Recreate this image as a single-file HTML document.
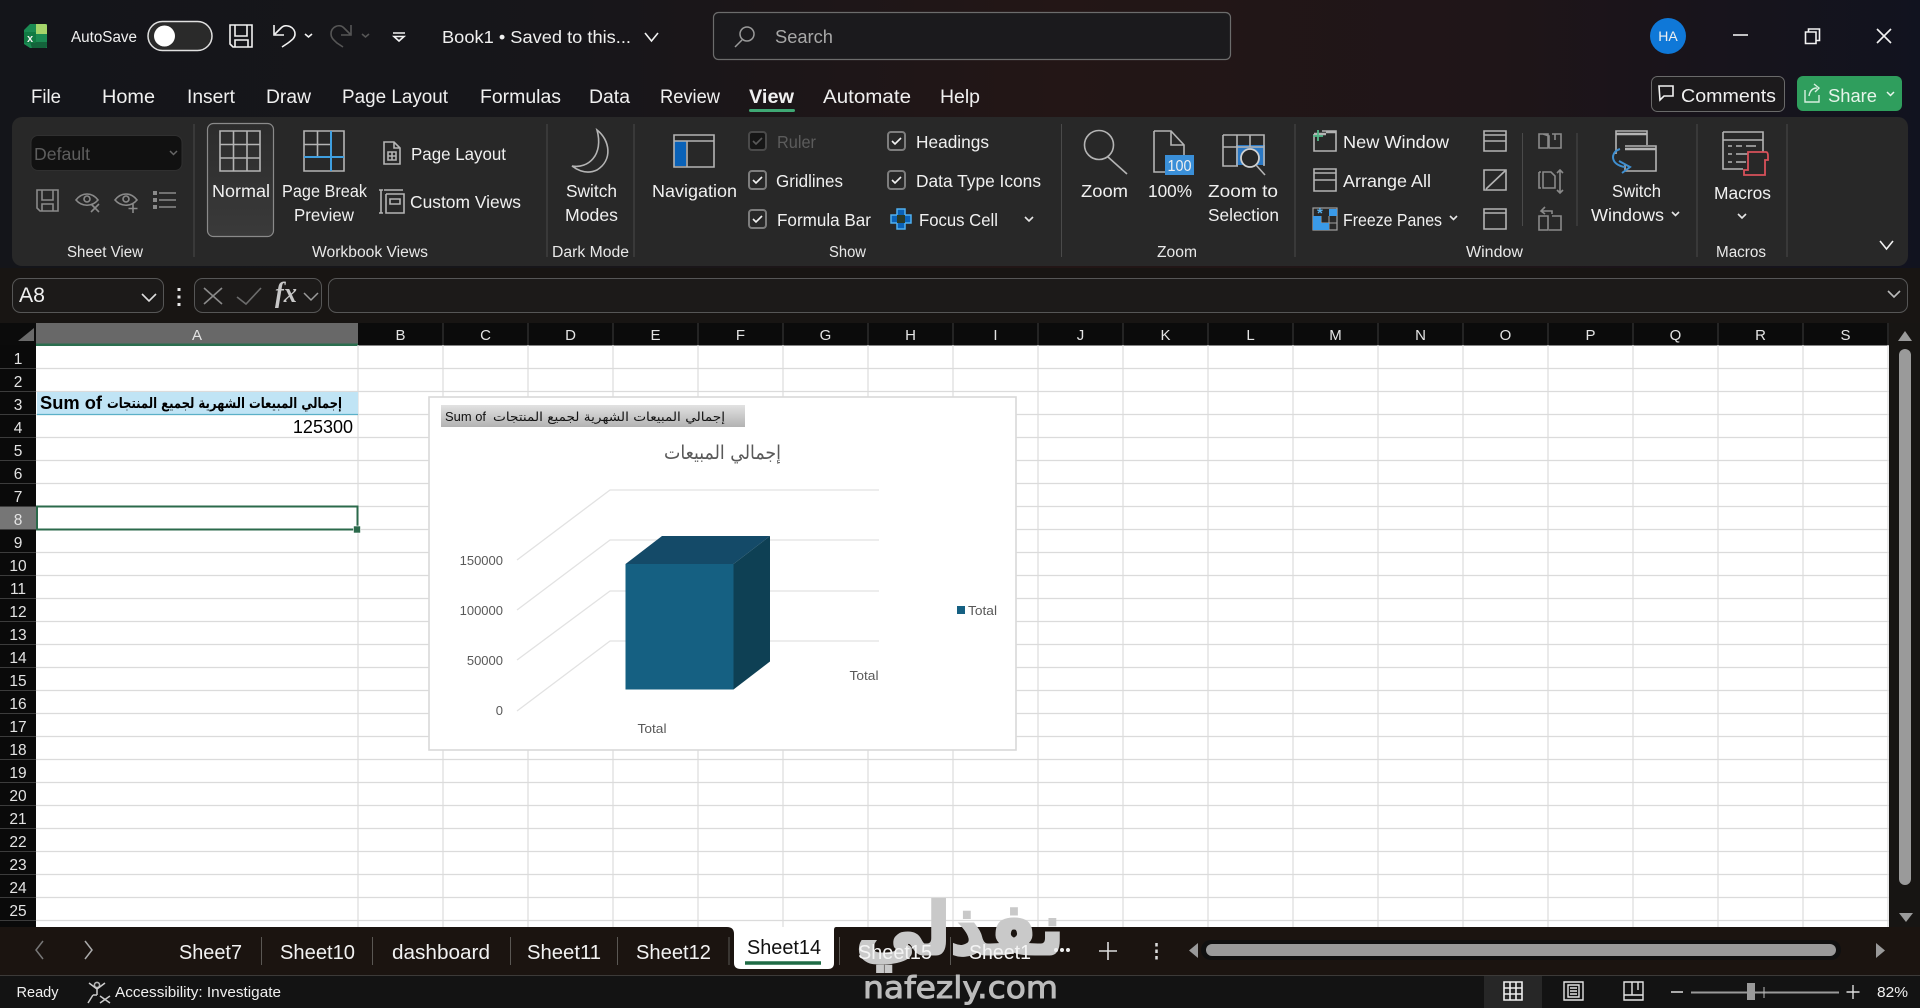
<!DOCTYPE html>
<html lang="en"><head><meta charset="utf-8"><title>Book1 - Excel</title>
<style>
html,body{margin:0;padding:0;background:#15161a;overflow:hidden;width:1920px;height:1008px}
svg{display:block}
text{font-family:"Liberation Sans","DejaVu Sans",sans-serif;fill:#f0f0f0;white-space:pre}
.r{font-size:17.5px}
.l{font-size:15.5px;fill:#e8e8e8}
.tab{font-size:19px}
.s{font-size:15px}
.sh{font-size:20px;fill:#f2f2f2}
.ch{font-size:13px;fill:#595959}
.rn{font-size:15.5px;text-anchor:middle;fill:#e4e4e4}
.cn{font-size:15px;text-anchor:middle;fill:#e4e4e4}
.ic{fill:none;stroke:#b4b4b4;stroke-width:1.6}
.ig{fill:none;stroke:#8a8a8a;stroke-width:1.6}
.w{fill:none;stroke:#f2f2f2;stroke-width:1.6}
.cv{fill:none;stroke:#e6e6e6;stroke-width:1.6}
.sp{stroke:#4a4a4a;stroke-width:1}
.ar{font-family:"DejaVu Sans",sans-serif}
</style></head><body>
<svg xmlns="http://www.w3.org/2000/svg" width="1920" height="1008" viewBox="0 0 1920 1008">
<defs>
<linearGradient id="bg" x1="0" x2="1" y1="0" y2="0"><stop offset="0" stop-color="#14151a"/><stop offset=".3" stop-color="#17161a"/><stop offset=".55" stop-color="#231616"/><stop offset=".78" stop-color="#1f1518"/><stop offset="1" stop-color="#11131f"/></linearGradient>
<linearGradient id="sel" x1="0" x2="0" y1="0" y2="1"><stop offset="0" stop-color="#2c2c2c"/><stop offset="1" stop-color="#3a3a3a"/></linearGradient>
<linearGradient id="pb" x1="0" x2="0" y1="0" y2="1"><stop offset="0" stop-color="#e2e2e2"/><stop offset="1" stop-color="#b2b2b2"/></linearGradient>
</defs>
<rect width="1920" height="1008" fill="url(#bg)"/>
<rect y="268" width="1920" height="56" fill="#181513"/>

<!-- title bar -->
<path d="M30 24H47V48H30L24 44V30Z" fill="#1b8a52"/><path d="M36 24H45Q47 24 47 26V34H36Z" fill="#a5d46a"/><path d="M30 42H47V46Q47 48 45 48H32Z" fill="#14633b"/><rect x="24" y="32" width="12" height="11" rx="1.5" fill="#117a43"/>
<text x="27" y="42" style="font-size:11px;font-weight:bold">x</text>
<text x="71" y="42" style="font-size:15.5px" textLength="66" lengthAdjust="spacingAndGlyphs">AutoSave</text>
<rect x="148" y="21.5" width="64" height="29" rx="14.5" fill="#2a2a2a" stroke="#e0e0e0" stroke-width="1.5"/><circle cx="164.500" cy="36" r="10.500" fill="#fff"/>
<path class="w" d="M230 25H252V47H233L230 44ZM235 25V36H247V25M235 47V40H248V47"/>
<path class="w" d="M274 25V35H284M275 34L281 28C286 23 295 27 295 34C295 38 292 40 288 43L282 47"/>
<path class="w" d="M305 34l3.500 3 3.500-3" stroke-width="2"/>
<path fill="none" stroke="#565656" stroke-width="1.6" d="M351 25V35H341M350 34L344 28C339 23 331 27 331 34C331 38 334 40 337 43L343 47M362 34l3.500 3 3.500-3"/>
<path class="w" d="M393 33H405M394 36.500H404L399 41Z"/>
<text x="442" y="43" style="font-size:17.500px" textLength="189" lengthAdjust="spacingAndGlyphs">Book1 • Saved to this...</text>
<path class="w" d="M645 33L651.500 41L658 33"/>
<rect x="713.500" y="12.500" width="517" height="47" rx="5" fill="#1b1a1d" stroke="#6c6c6c" stroke-width="1.2"/>
<circle cx="747" cy="34" r="7" fill="none" stroke="#9a9a9a" stroke-width="1.5"/><path d="M742 40L735 47" stroke="#9a9a9a" stroke-width="1.5"/>
<text x="775" y="43" style="font-size:18px;fill:#a8a8a8" textLength="58" lengthAdjust="spacingAndGlyphs">Search</text>
<circle cx="1668" cy="36" r="18" fill="#0f78d8"/><text x="1668" y="41" text-anchor="middle" style="font-size:14px">HA</text>
<path d="M1733 35H1748" stroke="#eee" stroke-width="1.6"/>
<path class="w" d="M1805.500 32H1816V43.500H1805.500ZM1808.500 32V29H1819.500V40.500H1816"/>
<path class="w" d="M1877 29L1891 43M1891 29L1877 43"/>
<rect x="1651.500" y="76.500" width="133" height="35" rx="6" fill="#1c1a1c" stroke="#6a6a6a"/>
<path class="w" d="M1659 86H1673V96H1664L1660 100Z"/>
<text x="1681" y="102" style="font-size:18px" textLength="95" lengthAdjust="spacingAndGlyphs">Comments</text>
<rect x="1797" y="76" width="105" height="35" rx="6" fill="#2f9e5d"/>
<path fill="none" stroke="#d8efe0" stroke-width="1.4" d="M1805 90V102H1819V95M1809 96C1810 90 1813 88 1817 88M1814 84L1819 88L1815 92"/>
<text x="1828" y="102" style="font-size:18.5px;fill:#e6f4ea" textLength="49" lengthAdjust="spacingAndGlyphs">Share</text>
<path d="M1887 92l3.500 3.500 3.500-3.500" fill="none" stroke="#eaf6ee" stroke-width="1.5"/>

<!-- tabs -->
<text class="tab" x="31" y="103" textLength="30" lengthAdjust="spacingAndGlyphs">File</text>
<text class="tab" x="102" y="103" textLength="53" lengthAdjust="spacingAndGlyphs">Home</text>
<text class="tab" x="187" y="103" textLength="48" lengthAdjust="spacingAndGlyphs">Insert</text>
<text class="tab" x="266" y="103" textLength="45" lengthAdjust="spacingAndGlyphs">Draw</text>
<text class="tab" x="342" y="103" textLength="106" lengthAdjust="spacingAndGlyphs">Page Layout</text>
<text class="tab" x="480" y="103" textLength="81" lengthAdjust="spacingAndGlyphs">Formulas</text>
<text class="tab" x="589" y="103" textLength="41" lengthAdjust="spacingAndGlyphs">Data</text>
<text class="tab" x="660" y="103" textLength="60" lengthAdjust="spacingAndGlyphs">Review</text>
<text class="tab" x="749" y="103" textLength="45" lengthAdjust="spacingAndGlyphs" style="font-weight:bold">View</text>
<text class="tab" x="823" y="103" textLength="88" lengthAdjust="spacingAndGlyphs">Automate</text>
<text class="tab" x="940" y="103" textLength="40" lengthAdjust="spacingAndGlyphs">Help</text>
<rect x="749" y="109" width="46" height="3" rx="1.500" fill="#3fa874"/>

<!-- ribbon -->
<rect x="12" y="117" width="1896" height="149" rx="10" fill="#282828"/>
<g class="sp">
<path d="M194 124V257M547 124V257M634 124V257M1061.500 124V257M1295 124V257M1697 124V257M1787 124V257M1522.500 133V226M1577 133V226"/>
</g>
<rect x="31" y="135.500" width="151" height="35" rx="7" fill="#111" stroke="#303030"/>
<text x="34" y="160" style="font-size:17.500px;fill:#5e5e5e" textLength="56" lengthAdjust="spacingAndGlyphs">Default</text>
<path d="M170 151l3.500 3.500 3.500-3.500" fill="none" stroke="#666" stroke-width="1.5"/>
<path class="ig" d="M37 190H58V211H40L37 208ZM42 190V200H53V190M42 211V204H53V211"/>
<path class="ig" d="M76 200C82 192 92 192 98 200C92 207 82 207 76 200ZM91 204L99 212M99 204L91 212"/><circle cx="87" cy="199" r="3" class="ig"/>
<path class="ig" d="M115 200C121 192 131 192 137 200C131 207 121 207 115 200ZM133 204V213M128.500 208.500H137.500"/><circle cx="126" cy="199" r="3" class="ig"/>
<path class="ig" d="M159 193H176M159 200H176M159 207H176"/><path fill="#8a8a8a" d="M153 191h4v4h-4zM153 198h4v4h-4zM153 205h4v4h-4z"/>
<text class="l" x="67" y="257" textLength="76" lengthAdjust="spacingAndGlyphs">Sheet View</text>

<rect x="207.500" y="123.500" width="66" height="113" rx="6" fill="url(#sel)" stroke="#8a8a8a" stroke-width="1.2"/>
<path class="ic" stroke-width="2" d="M220 131H260V171H220ZM233.500 131V171M247 131V171M220 144.500H260M220 158H260"/>
<text class="r" x="212" y="197" textLength="58" lengthAdjust="spacingAndGlyphs">Normal</text>
<path class="ic" stroke-width="2" d="M304 131H344V171H304ZM317.500 131V157M304 144.500H331"/>
<path d="M304 157H344M331 131V171" stroke="#3f9fe0" stroke-width="2"/>
<text class="r" x="282" y="197" textLength="85" lengthAdjust="spacingAndGlyphs">Page Break</text>
<text class="r" x="294" y="221" textLength="60" lengthAdjust="spacingAndGlyphs">Preview</text>
<path class="ic" d="M384 142H394L400 148V164H384ZM394 142V148H400M388 152H396V160H388ZM392 152V160M388 156H396"/>
<text class="r" x="411" y="160" textLength="95" lengthAdjust="spacingAndGlyphs">Page Layout</text>
<path class="ic" d="M381 190V213M379 190H383M379 213H383M384 190H403M386 194V213H404V194H386M390 199H400V204H390Z"/>
<text class="r" x="410" y="208" textLength="111" lengthAdjust="spacingAndGlyphs">Custom Views</text>
<text class="l" x="312" y="257" textLength="116" lengthAdjust="spacingAndGlyphs">Workbook Views</text>

<path class="ic" stroke-width="1.800" d="M597 130C610 140 613 160 597 170C588 174 580 172 572 166C588 169 604 155 597 130Z"/>
<text class="r" x="566" y="197" textLength="51" lengthAdjust="spacingAndGlyphs">Switch</text>
<text class="r" x="565" y="221" textLength="53" lengthAdjust="spacingAndGlyphs">Modes</text>
<text class="l" x="552" y="257" textLength="77" lengthAdjust="spacingAndGlyphs">Dark Mode</text>

<rect x="674" y="141" width="12" height="25" fill="#0a62b8"/>
<path class="ic" stroke-width="2" d="M674 135H714V167H674ZM674 141H714M687 141V167"/>
<text class="r" x="652" y="197" textLength="85" lengthAdjust="spacingAndGlyphs">Navigation</text>

<!-- checkboxes -->
<rect x="749" y="132" width="17" height="18" rx="3" fill="#161616" stroke="#4a4a4a" stroke-width="2"/><path d="M753 141l3 3 6-6" fill="none" stroke="#5a5a5a" stroke-width="1.6"/>
<text x="777" y="148" class="r" style="fill:#5c5c5c" textLength="39" lengthAdjust="spacingAndGlyphs">Ruler</text>
<rect x="749" y="171" width="17" height="18" rx="3" fill="none" stroke="#7d7d7d" stroke-width="2"/><path class="w" d="M753 180l3 3 6-6"/>
<text class="r" x="776" y="187" textLength="67" lengthAdjust="spacingAndGlyphs">Gridlines</text>
<rect x="749" y="210" width="17" height="18" rx="3" fill="none" stroke="#7d7d7d" stroke-width="2"/><path class="w" d="M753 219l3 3 6-6"/>
<text class="r" x="777" y="226" textLength="94" lengthAdjust="spacingAndGlyphs">Formula Bar</text>
<rect x="888" y="132" width="17" height="18" rx="3" fill="none" stroke="#7d7d7d" stroke-width="2"/><path class="w" d="M892 141l3 3 6-6"/>
<text class="r" x="916" y="148" textLength="73" lengthAdjust="spacingAndGlyphs">Headings</text>
<rect x="888" y="171" width="17" height="18" rx="3" fill="none" stroke="#7d7d7d" stroke-width="2"/><path class="w" d="M892 180l3 3 6-6"/>
<text class="r" x="916" y="187" textLength="125" lengthAdjust="spacingAndGlyphs">Data Type Icons</text>
<path d="M897 209H905V215H911V223H905V229H897V223H891V215H897Z" fill="#0a62b8" stroke="#50b0f0" stroke-width="1.500"/><rect x="897" y="215" width="8" height="8" fill="#2a3a2a"/>
<text class="r" x="919" y="226" textLength="79" lengthAdjust="spacingAndGlyphs">Focus Cell</text>
<path class="cv" d="M1025 217l4 4 4-4"/>
<text class="l" x="829" y="257" textLength="37" lengthAdjust="spacingAndGlyphs">Show</text>

<!-- zoom -->
<circle cx="1099" cy="145" r="14.500" class="ic" stroke-width="1.800"/><path class="ic" stroke-width="1.800" d="M1108 157L1127 174"/>
<text class="r" x="1081" y="197" textLength="47" lengthAdjust="spacingAndGlyphs">Zoom</text>
<path class="ic" stroke-width="1.800" d="M1154 131H1171L1184 145V155M1171 131V145H1184M1154 131V172H1165"/>
<rect x="1165" y="155" width="29" height="20" fill="#3a8fd8"/><text x="1167.500" y="171" style="font-size:16px" textLength="24" lengthAdjust="spacingAndGlyphs">100</text>
<text class="r" x="1148" y="197" textLength="44" lengthAdjust="spacingAndGlyphs">100%</text>
<rect x="1236" y="145" width="29" height="20" fill="#2a78c4"/>
<path class="ic" stroke-width="1.800" d="M1223 135H1264V166M1223 135V166H1238M1223 147H1264M1237 135V166M1250 135V147"/>
<circle cx="1250" cy="158" r="9" fill="#282828" stroke="#d0d0d0" stroke-width="1.800"/><path class="ic" stroke="#d0d0d0" stroke-width="1.800" d="M1256 165L1265 175"/>
<text class="r" x="1208" y="197" textLength="70" lengthAdjust="spacingAndGlyphs">Zoom to</text>
<text class="r" x="1208" y="221" textLength="71" lengthAdjust="spacingAndGlyphs">Selection</text>
<text class="l" x="1157" y="257" textLength="40" lengthAdjust="spacingAndGlyphs">Zoom</text>

<!-- window -->
<path class="ic" stroke-width="1.800" d="M1314 134V151H1336V131H1322"/><path d="M1314 134H1326M1326 132H1336" stroke="#b4b4b4" stroke-width="2.500"/><path d="M1313 136H1323M1318 130V141" stroke="#52b788" stroke-width="1.800"/>
<text class="r" x="1343" y="148" textLength="106" lengthAdjust="spacingAndGlyphs">New Window</text>
<path class="ic" stroke-width="1.800" d="M1314 169H1336V191H1314ZM1314 180H1336M1314 173H1336"/>
<text class="r" x="1343" y="187" textLength="88" lengthAdjust="spacingAndGlyphs">Arrange All</text>
<rect x="1313" y="208" width="24" height="22" fill="none" stroke="#a0a0a0" stroke-width="1.200"/><path d="M1321 216V230M1329 216V230M1313 223H1337" stroke="#a0a0a0"/><rect x="1313" y="216" width="8" height="7" fill="#3a9ae8"/><rect x="1329" y="209" width="8" height="7" fill="#3a9ae8"/><rect x="1313" y="223" width="8" height="7" fill="#3a9ae8"/><rect x="1321" y="223" width="8" height="7" fill="#3a9ae8"/>
<text x="1317" y="218" style="font-size:15px;fill:#5ab2f0;font-weight:bold">*</text>
<text class="r" x="1343" y="226" textLength="99" lengthAdjust="spacingAndGlyphs">Freeze Panes</text>
<path class="cv" d="M1450 216l3.500 3.500 3.500-3.500"/>
<path class="ic" stroke-width="1.800" d="M1484 131H1506V151H1484ZM1484 141H1506M1484 135H1506"/>
<path class="ic" stroke-width="1.800" d="M1484 170H1506V190H1484ZM1486 189L1505 171"/>
<path class="ic" stroke-width="1.800" d="M1484 209H1506V229H1484ZM1484 213H1506"/>
<path class="ig" d="M1539 134H1548V148H1539ZM1543 134L1549 136V148M1552 134H1561V148H1549M1555 134V140"/>
<path class="ig" d="M1539 172V188H1541M1539 172H1541M1543 172H1551L1555 176V188H1543ZM1560 170V193M1557 173L1560 170L1563 173M1557 190L1560 193L1563 190"/>
<path class="ig" d="M1539 216H1548V230H1539ZM1552 216H1561V230H1549M1545 207L1541 211L1545 214M1541 211H1552V214"/>
<path class="ic" stroke-width="1.800" d="M1616 154V131H1647V145"/><path d="M1616 134H1647" stroke="#b4b4b4" stroke-width="2.500"/>
<path class="ic" stroke-width="1.800" d="M1625 146H1656V171H1625V165"/><path d="M1625 149H1656" stroke="#b4b4b4" stroke-width="2.500"/>
<path fill="none" stroke="#3f8fd0" stroke-width="2" d="M1620 149C1610 152 1610 165 1625 167M1619 161L1630 167L1622 173"/>
<text class="r" x="1612" y="197" textLength="49" lengthAdjust="spacingAndGlyphs">Switch</text>
<text class="r" x="1591" y="221" textLength="73" lengthAdjust="spacingAndGlyphs">Windows</text>
<path class="cv" d="M1672 212l3.500 3.500 3.500-3.500"/>
<text class="l" x="1466" y="257" textLength="57" lengthAdjust="spacingAndGlyphs">Window</text>

<!-- macros -->
<path class="ic" stroke-width="1.800" d="M1723 132H1763V168M1723 132V169H1743M1723 140H1763M1728 146H1732M1736 146H1742M1746 146H1756M1728 154H1732M1736 154H1752M1728 162H1732M1736 162H1746"/>
<path fill="#282828" stroke="#d8515a" stroke-width="1.800" d="M1750 152H1766Q1768 152 1768 156V160H1765V175H1744V170H1748V152Z"/>
<text class="r" x="1714" y="199" textLength="57" lengthAdjust="spacingAndGlyphs">Macros</text>
<path class="cv" d="M1738 214l4 4 4-4"/>
<text class="l" x="1716" y="257" textLength="50" lengthAdjust="spacingAndGlyphs">Macros</text>
<path class="w" d="M1880 241L1886.500 249L1893 241"/>

<!-- formula bar -->
<rect x="12.500" y="278.500" width="151" height="34" rx="8" fill="#1c1a19" stroke="#565656"/>
<text x="19" y="302" style="font-size:21px" textLength="26" lengthAdjust="spacingAndGlyphs">A8</text>
<path d="M142 294l7 7 7-7" fill="none" stroke="#ddd" stroke-width="1.600"/>
<path d="M179 288v3M179 295.500v3M179 303v3" stroke="#e8e8e8" stroke-width="3"/>
<rect x="194.500" y="278.500" width="127" height="34" rx="8" fill="#1c1a19" stroke="#565656"/>
<path d="M204 288L222 304M222 288L204 304" stroke="#8a8a8a" stroke-width="1.600"/>
<path d="M237 297L246 304L261 288" fill="none" stroke="#6c6c6c" stroke-width="1.600"/>
<text x="275" y="302" style="font-family:'Liberation Serif',serif;font-style:italic;font-weight:bold;font-size:28px;fill:#c8c8c8" textLength="22" lengthAdjust="spacingAndGlyphs">fx</text>
<path d="M304 293l7 7 7-7" fill="none" stroke="#9a9a9a" stroke-width="1.500"/>
<rect x="328.500" y="278.500" width="1579" height="34" rx="8" fill="#1c1a19" stroke="#565656"/>
<path d="M1888 291l6 6 6-6" fill="none" stroke="#bbb" stroke-width="1.600"/>

<!-- sheet grid -->
<rect x="36" y="345" width="1853" height="582" fill="#fff"/>
<rect y="323" width="1889" height="22.500" fill="#0b0b0b"/>
<rect y="345" width="36" height="582" fill="#0a0a0a"/>
<path d="M34 328V341H18Z" fill="#6a6a6a"/>
<rect x="36" y="323" width="322" height="21" fill="#686868"/>
<rect x="36" y="343.500" width="322" height="2.500" fill="#2b6e4f"/>
<rect y="506" width="36" height="23" fill="#767676"/>
<path stroke="#dbdbdb" stroke-width="1.200" fill="none" d="M358 345V927M443 345V927M528 345V927M613 345V927M698 345V927M783 345V927M868 345V927M953 345V927M1038 345V927M1123 345V927M1208 345V927M1293 345V927M1378 345V927M1463 345V927M1548 345V927M1633 345V927M1718 345V927M1803 345V927M1888 345V927M36 368.500H1889M36 391.500H1889M36 414.500H1889M36 437.500H1889M36 460.500H1889M36 483.500H1889M36 506.500H1889M36 529.500H1889M36 552.500H1889M36 575.500H1889M36 598.500H1889M36 621.500H1889M36 644.500H1889M36 667.500H1889M36 690.500H1889M36 713.500H1889M36 736.500H1889M36 759.500H1889M36 782.500H1889M36 805.500H1889M36 828.500H1889M36 851.500H1889M36 874.500H1889M36 897.500H1889M36 920.500H1889"/>
<path stroke="#3c3c3c" fill="none" d="M443 323V345M528 323V345M613 323V345M698 323V345M783 323V345M868 323V345M953 323V345M1038 323V345M1123 323V345M1208 323V345M1293 323V345M1378 323V345M1463 323V345M1548 323V345M1633 323V345M1718 323V345M1803 323V345M1888 323V345M0 368.500H36M0 391.500H36M0 414.500H36M0 437.500H36M0 460.500H36M0 483.500H36M0 506.500H36M0 529.500H36M0 552.500H36M0 575.500H36M0 598.500H36M0 621.500H36M0 644.500H36M0 667.500H36M0 690.500H36M0 713.500H36M0 736.500H36M0 759.500H36M0 782.500H36M0 805.500H36M0 828.500H36M0 851.500H36M0 874.500H36M0 897.500H36M0 920.500H36"/>
<g>
<text class="cn" x="197" y="340">A</text><text class="cn" x="400.500" y="340">B</text><text class="cn" x="485.500" y="340">C</text><text class="cn" x="570.500" y="340">D</text><text class="cn" x="655.500" y="340">E</text><text class="cn" x="740.500" y="340">F</text><text class="cn" x="825.500" y="340">G</text><text class="cn" x="910.500" y="340">H</text><text class="cn" x="995.500" y="340">I</text><text class="cn" x="1080.500" y="340">J</text><text class="cn" x="1165.500" y="340">K</text><text class="cn" x="1250.500" y="340">L</text><text class="cn" x="1335.500" y="340">M</text><text class="cn" x="1420.500" y="340">N</text><text class="cn" x="1505.500" y="340">O</text><text class="cn" x="1590.500" y="340">P</text><text class="cn" x="1675.500" y="340">Q</text><text class="cn" x="1760.500" y="340">R</text><text class="cn" x="1845.500" y="340">S</text>
</g>
<g>
<text class="rn" x="18" y="364">1</text><text class="rn" x="18" y="387">2</text><text class="rn" x="18" y="410">3</text><text class="rn" x="18" y="433">4</text><text class="rn" x="18" y="456">5</text><text class="rn" x="18" y="479">6</text><text class="rn" x="18" y="502">7</text><text class="rn" x="18" y="525">8</text><text class="rn" x="18" y="548">9</text><text class="rn" x="18" y="571">10</text><text class="rn" x="18" y="594">11</text><text class="rn" x="18" y="617">12</text><text class="rn" x="18" y="640">13</text><text class="rn" x="18" y="663">14</text><text class="rn" x="18" y="686">15</text><text class="rn" x="18" y="709">16</text><text class="rn" x="18" y="732">17</text><text class="rn" x="18" y="755">18</text><text class="rn" x="18" y="778">19</text><text class="rn" x="18" y="801">20</text><text class="rn" x="18" y="824">21</text><text class="rn" x="18" y="847">22</text><text class="rn" x="18" y="870">23</text><text class="rn" x="18" y="893">24</text><text class="rn" x="18" y="916">25</text>
</g>

<!-- cells -->
<rect x="37" y="392" width="321" height="22" fill="#c0e4f5"/><path d="M37 414.500H358" stroke="#5bb0c8" stroke-width="1.200"/>
<text x="40" y="409" style="font-size:18px;font-weight:bold;fill:#000" textLength="62" lengthAdjust="spacingAndGlyphs">Sum of</text>
<text class="ar" x="107" y="408" style="font-size:14.5px;font-weight:bold;fill:#000" textLength="235" lengthAdjust="spacingAndGlyphs">إجمالي المبيعات الشهرية لجميع المنتجات</text>
<text x="353" y="433" text-anchor="end" style="font-size:18px;fill:#000">125300</text>
<rect x="37" y="506.500" width="320.500" height="23" fill="none" stroke="#2b6a4b" stroke-width="2"/>
<rect x="353.500" y="526" width="7" height="7" fill="#2b6a4b" stroke="#fff" stroke-width=".6"/>

<!-- chart -->
<rect x="429" y="397" width="587" height="353" fill="#fff" stroke="#d9d9d9" stroke-width="1.600"/>
<rect x="441" y="405" width="304" height="22" fill="url(#pb)"/>
<text x="445" y="421" style="font-size:12.5px;fill:#111" textLength="41" lengthAdjust="spacingAndGlyphs">Sum of</text>
<text class="ar" x="493" y="421" style="font-size:12.5px;fill:#111" textLength="232" lengthAdjust="spacingAndGlyphs">إجمالي المبيعات الشهرية لجميع المنتجات</text>
<text class="ar" x="664" y="459" style="font-size:19px;fill:#595959" textLength="117" lengthAdjust="spacingAndGlyphs">إجمالي المبيعات</text>
<path stroke="#e2e2e2" stroke-width="1.300" fill="none" d="M517 560L610 490H879M517 610L610 540H879M517 660L610 591H879M517 711L610 641H879"/>
<path d="M625.500 564H733.500V689.500H625.500Z" fill="#156082"/>
<path d="M625.500 564L662 536H770L733.500 564Z" fill="#144a68"/>
<path d="M733.500 564L770 536V661.500L733.500 689.500Z" fill="#0e4054"/>
<text class="ch" x="503" y="565" text-anchor="end">150000</text>
<text class="ch" x="503" y="615" text-anchor="end">100000</text>
<text class="ch" x="503" y="665" text-anchor="end">50000</text>
<text class="ch" x="503" y="715" text-anchor="end">0</text>
<text class="ch" x="849.500" y="680" textLength="29" lengthAdjust="spacingAndGlyphs">Total</text>
<text class="ch" x="637.500" y="733" textLength="29" lengthAdjust="spacingAndGlyphs">Total</text>
<rect x="957" y="606" width="8" height="8" fill="#156082"/>
<text class="ch" x="968" y="615" textLength="29" lengthAdjust="spacingAndGlyphs">Total</text>

<!-- right scrollbar -->
<rect x="1889" y="323" width="31" height="604" fill="#171513"/>
<path d="M1905 331L1912 341H1898Z" fill="#9a9a9a"/>
<rect x="1899" y="349" width="12" height="536" rx="6" fill="#9a9a9a"/>
<path d="M1906 922L1899 913H1913Z" fill="#9a9a9a"/>

<!-- sheet tabs -->
<rect y="927" width="1920" height="48" fill="#1b1410"/>
<rect y="975" width="1920" height="33" fill="#131313"/>
<path d="M0 975.500H1920" stroke="#3c3a38"/>
<path d="M732 927H836Q834 927 834 930V963Q834 969 828 969H741Q734 969 734 963V934Q734 927 727 927Z" fill="#fff"/>
<path d="M745 963H821" stroke="#1f6b45" stroke-width="3.500"/>
<path d="M43 941L36 950L43 959" fill="none" stroke="#777" stroke-width="1.500"/>
<path d="M85 941L92 950L85 959" fill="none" stroke="#aaa" stroke-width="1.500"/>
<path stroke="#5a5753" d="M261.500 937V965M372.500 937V965M510.500 937V965M617.500 937V965M729 937V965M839.500 937V965M950.500 937V965"/>
<text class="sh" x="179" y="959" textLength="63" lengthAdjust="spacingAndGlyphs">Sheet7</text>
<text class="sh" x="280" y="959" textLength="75" lengthAdjust="spacingAndGlyphs">Sheet10</text>
<text class="sh" x="392" y="959" textLength="98" lengthAdjust="spacingAndGlyphs">dashboard</text>
<text class="sh" x="527" y="959" textLength="74" lengthAdjust="spacingAndGlyphs">Sheet11</text>
<text class="sh" x="636" y="959" textLength="75" lengthAdjust="spacingAndGlyphs">Sheet12</text>
<text class="sh" x="747" y="954" textLength="74" lengthAdjust="spacingAndGlyphs" style="fill:#111">Sheet14</text>

<!-- watermark -->
<text class="ar" x="856" y="954" style="font-size:72px;font-weight:bold;fill:#c9c9c9;stroke:#c9c9c9;stroke-width:3" textLength="208" lengthAdjust="spacingAndGlyphs">نفذلي</text>
<text x="863" y="998" style="font-family:'DejaVu Sans',sans-serif;font-size:30px;fill:#bcbcbc;stroke:#bcbcbc;stroke-width:.9" textLength="195" lengthAdjust="spacingAndGlyphs">nafezly.com</text>

<text class="sh" x="858" y="959" textLength="74" lengthAdjust="spacingAndGlyphs" style="fill:#f4f4f4">Sheet15</text>
<text class="sh" x="969" y="959" textLength="62" lengthAdjust="spacingAndGlyphs" style="fill:#f4f4f4">Sheet1</text>
<circle cx="1056" cy="950" r="2" fill="#eee"/><circle cx="1062" cy="950" r="2" fill="#eee"/><circle cx="1068" cy="950" r="2" fill="#eee"/>
<path d="M1108 942V960M1099 951H1117" stroke="#ddd" stroke-width="1.600"/>
<path d="M1156.500 943v3.500M1156.500 949.500v3.500M1156.500 956v3.500" stroke="#ddd" stroke-width="2.500"/>
<path d="M1198 943V958L1189 950.500Z" fill="#9a9a9a"/>
<rect x="1201" y="940" width="640" height="20" rx="10" fill="#101010"/>
<rect x="1206" y="944" width="630" height="12" rx="6" fill="#9a9a9a"/>
<path d="M1876 943V958L1885 950.500Z" fill="#9a9a9a"/>

<!-- status -->
<text class="s" x="16.500" y="997" textLength="42" lengthAdjust="spacingAndGlyphs">Ready</text>
<circle cx="97" cy="985" r="2.600" class="ic" stroke="#ccc"/><path fill="none" stroke="#ccc" stroke-width="1.500" d="M89 983L97 989L105 983M97 989V995M93 995L88 1003M97 995H93M100 996L110 1003M110 996L100 1003"/>
<text class="s" x="115" y="997" textLength="166" lengthAdjust="spacingAndGlyphs">Accessibility: Investigate</text>
<rect x="1484" y="976" width="58" height="32" fill="#272727"/>
<path d="M1504 982H1522V1000H1504ZM1510 982V1000M1516 982V1000M1504 988H1522M1504 994H1522" fill="none" stroke="#efefef" stroke-width="1.600"/>
<path d="M1564 982H1583V1000H1564ZM1568 985H1579V997H1568ZM1570 988H1577M1570 991H1577M1570 994H1577" fill="none" stroke="#e4e4e4" stroke-width="1.400"/>
<path d="M1624 982H1643V1000H1624ZM1624 995H1643M1632 982V995M1638 982V990" fill="none" stroke="#e4e4e4" stroke-width="1.400"/>
<path d="M1671 992H1683M1853 985V999M1846.500 992H1859.500" stroke="#ddd" stroke-width="1.400"/>
<path d="M1691 992.500H1839" stroke="#9a9a9a" stroke-width="2"/>
<rect x="1747" y="983" width="8" height="17" fill="#9a9a9a"/>
<path d="M1764 987V998" stroke="#bbb"/>
<text class="s" x="1877" y="997" textLength="31" lengthAdjust="spacingAndGlyphs">82%</text>
</svg>
</body></html>
